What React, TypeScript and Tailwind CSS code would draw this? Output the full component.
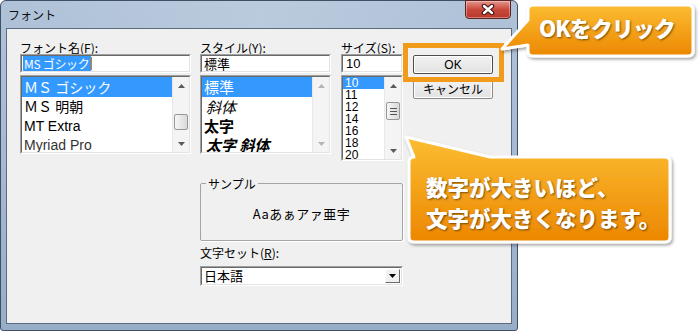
import { clsx } from 'clsx';

const jp = "font-['Noto_Sans_CJK_JP',sans-serif]";

function Tri({ up, color }: { up?: boolean; color: string }) {
  return (
    <svg width="7" height="4" viewBox="0 0 7 4">
      <polygon points={up ? '0,4 3.5,0 7,4' : '0,0 7,0 3.5,4'} fill={color} />
    </svg>
  );
}

function Sunken({ className, children }: { className?: string; children?: React.ReactNode }) {
  return (
    <div className={clsx('border border-t-[#a0a0a0] border-l-[#a0a0a0] border-r-white border-b-white', className)}>
      <div className="h-full flex overflow-hidden bg-white border border-t-[#696969] border-l-[#696969] border-r-[#e3e3e3] border-b-[#e3e3e3]">
        {children}
      </div>
    </div>
  );
}

function ScrollBar({ thumb, grip, disabled }: { thumb?: string; grip?: boolean; disabled?: boolean }) {
  const c = disabled ? '#b4b4b4' : '#5a5a5a';
  return (
    <div className="w-[17px] shrink-0 flex flex-col bg-[#f4f4f4] border-l border-[#e8e8e8]">
      <div className="h-[17px] flex items-center justify-center"><Tri up color={c} /></div>
      <div className="flex-1">
        {thumb && (
          <div className={clsx('mx-[1px] rounded-[2px] border border-[#979797] bg-gradient-to-r from-[#f6f6f6] to-[#d9d9d9] flex flex-col items-center justify-center gap-[2px]', thumb)}>
            {grip && [0, 1, 2].map(i => <div key={i} className="w-[7px] h-px bg-[#555]" />)}
          </div>
        )}
      </div>
      <div className="h-[17px] flex items-center justify-center"><Tri color={c} /></div>
    </div>
  );
}

function Label({ text, k }: { text: string; k: string }) {
  return (
    <div className="h-[13px] text-[12px] leading-[13px] text-black whitespace-nowrap">
      {text}(<u>{k}</u>):
    </div>
  );
}

function CloseButton() {
  return (
    <div className="-mt-px mr-[1px] w-[46px] h-[19px] rounded-b-[4px] border border-[#5c2420] bg-gradient-to-b from-[#e3958c] via-[#c9483c] to-[#b9372b] flex items-center justify-center shadow-[inset_0_0_0_1px_rgba(255,255,255,0.35)]">
      <svg width="14" height="11" viewBox="0 0 14 11">
        <path d="M3 2 L11 9 M11 2 L3 9" stroke="#3a1512" strokeWidth="4.5" strokeLinecap="round" />
        <path d="M3 2 L11 9 M11 2 L3 9" stroke="#fff" strokeWidth="2.4" strokeLinecap="round" />
      </svg>
    </div>
  );
}

function Window() {
  return (
    <div className="w-[518px] h-[331px] rounded-t-[6px] rounded-b-[3px] border border-[#3f4f64] bg-gradient-to-b from-[#afc2d8] via-[#a5b9d1] to-[#98aec8] px-[5px] pb-[6px] flex flex-col">
      <div className="h-[27px] flex items-start justify-between bg-gradient-to-r from-transparent via-[#c3d1e2]/60 to-transparent">
        <span className="mt-[7px] ml-[2px] text-[12px] leading-[14px] text-[#101010]">フォント</span>
        <CloseButton />
      </div>

      <div className="flex-1 border border-[#5b6b80] bg-[#f0f0f0] pl-[13px] pt-[12px] flex items-start">
        {/* font name */}
        <div className="w-[171px] flex flex-col">
          <Label text="フォント名" k="F" />
          <Sunken className="h-[19px]">
            <div className="pl-[1px] text-[12px] leading-[15px] flex items-center tracking-[-0.3px]">
              <span className="bg-[#3399ff] text-white px-[1px]">MS ゴシック</span>
              <span className="w-px h-[13px] bg-[#e07b00]" />
            </div>
          </Sunken>
          <Sunken className="mt-[2px] h-[79px]">
            <div className="flex-1 text-[14px] leading-[19.5px]">
              <div className="bg-[#3399ff] text-white pl-[2px] h-[20px] leading-[20px]">ＭＳ ゴシック</div>
              <div className="pl-[2px]">ＭＳ 明朝</div>
              <div className="pl-[2px] font-['Liberation_Sans',sans-serif]">MT Extra</div>
              <div className="pl-[2px] font-['Liberation_Sans',sans-serif] text-[#333]">Myriad Pro</div>
            </div>
            <ScrollBar thumb="mt-[20px] h-[16px]" />
          </Sunken>
        </div>

        {/* middle */}
        <div className="ml-[9px] w-[203px] flex flex-col">
          <div className="h-[118px] flex items-start">
            <div className="w-[131px] flex flex-col">
              <Label text="スタイル" k="Y" />
              <Sunken className="h-[19px]">
                <div className="pl-[2px] text-[13px] leading-[15px]">標準</div>
              </Sunken>
              <Sunken className="mt-[2px] h-[79px]">
                <div className="flex-1 text-[15px] leading-[19px]">
                  <div className="bg-[#3399ff] text-white pl-[2px] h-[20px] leading-[20px]">標準</div>
                  <div className="pl-[4px] italic">斜体</div>
                  <div className="pl-[2px] font-bold">太字</div>
                  <div className="pl-[4px] font-bold italic">太字 斜体</div>
                </div>
                <ScrollBar disabled />
              </Sunken>
            </div>
            <div className="ml-[10px] w-[62px] flex flex-col">
              <Label text="サイズ" k="S" />
              <Sunken className="h-[19px]">
                <div className="pl-[3px] text-[13px] leading-[15px] font-['Liberation_Sans',sans-serif]">10</div>
              </Sunken>
              <Sunken className="mt-[2px] h-[86px]">
                <div className="flex-1 text-[12px] leading-[12px] font-['Liberation_Sans',sans-serif]">
                  {['10', '11', '12', '14', '16', '18', '20'].map((s, i) => (
                    <div key={s} className={clsx('pl-[2px] h-[12px]', i === 0 && 'bg-[#3399ff] text-white')}>{s}</div>
                  ))}
                </div>
                <ScrollBar thumb="mt-[8px] h-[18px]" grip />
              </Sunken>
            </div>
          </div>

          <fieldset className="mt-[18px] h-[64px] border border-[#a5a5a5] rounded-[2px] shadow-[1px_1px_0_#fff] px-0">
            <legend className="ml-[5px] px-[2px] text-[12px] leading-[13px]">サンプル</legend>
            <div className="mt-[16px] text-center text-[13px] leading-[16px] tracking-[0.5px]">Aaあぁアァ亜宇</div>
          </fieldset>

          <div className="mt-[5px]"><Label text="文字セット" k="R" /></div>
          <Sunken className="mt-[7px] h-[20px]">
            <div className="flex-1 pl-[2px] text-[13px] leading-[16px]">日本語</div>
            <div className="w-[15px] m-px bg-[#f0f0f0] border border-t-white border-l-white border-r-[#6a6a6a] border-b-[#6a6a6a] flex items-center justify-center">
              <Tri color="#000" />
            </div>
          </Sunken>
        </div>

        {/* buttons */}
        <div className="ml-[10px] w-[80px] flex flex-col pt-[14px]">
          <div className="relative">
            <div className="h-[19px] rounded-[2px] border border-[#4d4d4d] bg-gradient-to-b from-[#f2f2f2] to-[#e2e2e2] shadow-[inset_0_0_0_1px_#fff] flex items-center justify-center text-[12px] font-['Liberation_Sans',sans-serif]">
              OK
            </div>
            <div className="absolute -left-[10px] -top-[12px] w-[101px] h-[39px] border-[5px] border-[#f29a1a]" />
          </div>
          <div className="mt-[5px] h-[20px] rounded-[2px] border border-[#8a8a8a] bg-gradient-to-b from-[#f2f2f2] to-[#e2e2e2] shadow-[inset_0_0_0_1px_#fff] flex items-center justify-center text-[12px]">
            キャンセル
          </div>
        </div>
      </div>
    </div>
  );
}

function Callouts() {
  return (
    <>
      <svg className="absolute left-0 top-0 pointer-events-none" width="700" height="332" viewBox="0 0 700 332">
        <defs>
          <linearGradient id="og" x1="0" y1="0" x2="0" y2="1">
            <stop offset="0" stopColor="#fcbd33" />
            <stop offset="1" stopColor="#ec8700" />
          </linearGradient>
          <filter id="sh" x="-10%" y="-10%" width="125%" height="140%">
            <feDropShadow dx="1.5" dy="2" stdDeviation="1.5" floodColor="#000" floodOpacity="0.35" />
          </filter>
        </defs>
        <path
          d="M533 5 H688 Q693 5 693 10 V51 Q693 56 688 56 H533 Q528 56 528 51 V45 L502 49 L528 20 V10 Q528 5 533 5 Z"
          fill="url(#og)" stroke="#fff" strokeWidth="3" strokeLinejoin="round" filter="url(#sh)"
        />
        <path
          d="M414 157 L406 137 L490 157 H665 Q670 157 670 162 V237 Q670 242 665 242 H414 Q409 242 409 237 V162 Q409 157 414 157 Z"
          fill="url(#og)" stroke="#fff" strokeWidth="3" strokeLinejoin="round" filter="url(#sh)"
        />
      </svg>
      <div className="absolute left-[539px] top-[13px] text-[22px] leading-[28px] font-black text-white tracking-[-1px] [text-shadow:1px_1px_2px_rgba(0,0,0,0.5)]">
        OKをクリック
      </div>
      <div className="absolute left-[426px] top-[171px] text-[21.5px] leading-[31px] font-black text-white [text-shadow:1px_1px_2px_rgba(0,0,0,0.5)]">
        <div>数字が大きいほど、</div>
        <div>文字が大きくなります。</div>
      </div>
    </>
  );
}

export default function App() {
  return (
    <div className={clsx('relative w-[700px] h-[332px] bg-white overflow-hidden text-black', jp)}>
      <Window />
      <Callouts />
    </div>
  );
}
